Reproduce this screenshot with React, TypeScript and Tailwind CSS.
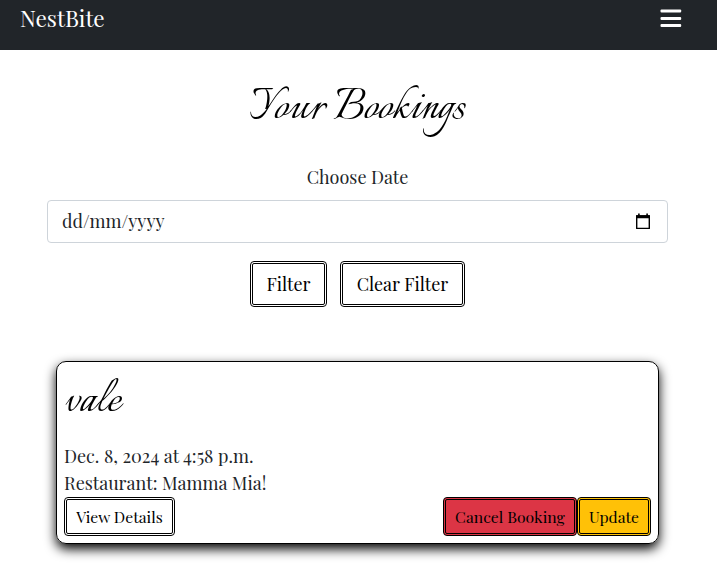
const serif = "font-['Playfair_Display','Liberation_Serif',serif]";
const script = "font-['Italianno','Liberation_Serif',cursive] text-black whitespace-nowrap";
const btn = "flex shrink-0 items-center justify-center rounded border-[3px] border-double border-black whitespace-nowrap text-black";

export default function App() {
  return (
    <div className={`flex h-[563px] w-[717px] flex-col overflow-hidden bg-white text-[#212529] ${serif}`}>
      <nav className="flex h-[50px] shrink-0 items-start justify-between bg-[#212529] pr-[35px] pl-5 text-white">
        <a className="pt-[2px] text-[22.5px] leading-[33px]">NestBite</a>
        <button className="pt-[9px]" aria-label="Menu">
          <svg width="22" height="18" viewBox="0 0 22 18" fill="currentColor">
            <rect x="0.5" y="0.4" width="20.7" height="3.2" rx="1" />
            <rect x="0.5" y="8" width="20.7" height="3" rx="1" />
            <rect x="0.5" y="15" width="20.7" height="3" rx="1" />
          </svg>
        </button>
      </nav>
      <main className="flex flex-col">
        <h1 className={`h-[76px] pt-[29px] pr-[2px] text-center text-[54px] leading-[60px] ${script}`}>Your Bookings</h1>
        <form className="flex flex-col items-center pt-[38px] pr-[2px]">
          <label className="text-[18px] leading-[27px]">Choose Date</label>
          <div className="mt-[9px] flex h-[43px] w-[621px] items-center justify-between rounded border border-[#ced4da] pr-[17px] pl-[14px]">
            <span className="text-[18px] leading-[27px]">dd/mm/yyyy</span>
            <svg width="14" height="17" viewBox="0 0 14 17" fill="none">
              <path d="M.7 3h12.6v12.4H.7z" stroke="black" strokeWidth="1.4" strokeLinejoin="round" />
              <path d="M0 2.3h14v3H0zM2.1.5h1.6v2H2.1zM10.3.5h1.6v2h-1.6z" fill="black" />
            </svg>
          </div>
          <div className="mt-[18px] flex gap-[13px] text-[18px]">
            <button type="button" className={`${btn} h-[46px] w-[77px]`}>Filter</button>
            <button type="button" className={`${btn} h-[46px] w-[125px]`}>Clear Filter</button>
          </div>
        </form>
        <section className="mt-[54px] ml-[56px] flex h-[183px] w-[603px] flex-col rounded-[10px] border border-black px-[7px] pb-[7px] shadow-[0_5px_12px_black]">
          <h2 className={`h-[81px] pt-[10px] text-[54px] leading-[60px] ${script}`}>vale</h2>
          <p className="h-[27px] text-[18px] leading-[27px] whitespace-nowrap">Dec. 8, 2024 at 4:58 p.m.</p>
          <p className="h-[27px] text-[18px] leading-[27px]">Restaurant: Mamma Mia!</p>
          <div className="flex justify-between text-[15.75px]">
            <button className={`${btn} h-[39px] w-[111px]`}>View Details</button>
            <div className="flex">
              <button className={`${btn} h-[39px] w-[134px] bg-[#dc3545]`}>Cancel Booking</button>
              <button className={`${btn} h-[39px] w-[74px] bg-[#ffc107]`}>Update</button>
            </div>
          </div>
        </section>
      </main>
    </div>
  );
}
